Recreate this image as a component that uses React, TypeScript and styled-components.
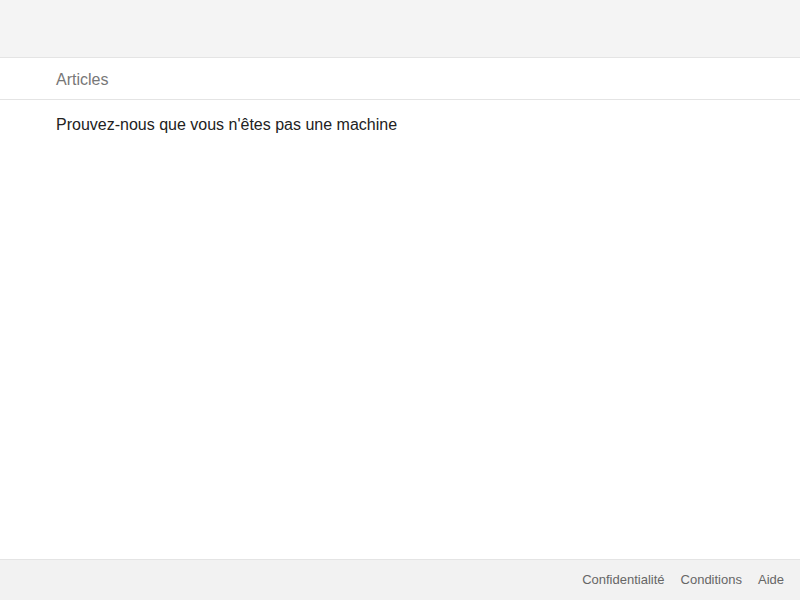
import React from "react";
import styled, { createGlobalStyle } from "styled-components";

const Global = createGlobalStyle`
  html, body { margin: 0; padding: 0; height: 100%; background: #fff; }
  body { font-family: "Liberation Sans", Arial, sans-serif; }
  #root { height: 100%; }
`;

const Page = styled.div`
  display: flex;
  flex-direction: column;
  height: 600px;
`;

const Header = styled.header`
  flex: none;
  height: 57px;
  background: #f4f4f4;
  border-bottom: 1px solid #e4e4e4;
`;

const TabBar = styled.nav`
  flex: none;
  height: 39px;
  padding-top: 2px;
  display: flex;
  align-items: center;
  padding-left: 56px;
  border-bottom: 1px solid #e4e4e4;
`;

const Tab = styled.span`
  font-size: 16px;
  color: #777;
`;

const Main = styled.main`
  flex: 1;
  padding: 15px 56px 0;
`;

const Title = styled.h1`
  margin: 0;
  font-size: 16px;
  font-weight: normal;
  color: #222;
  line-height: 20px;
`;

const Footer = styled.footer`
  flex: none;
  height: 38px;
  padding-bottom: 2px;
  background: #f2f2f2;
  border-top: 1px solid #e4e4e4;
  display: flex;
  align-items: center;
  justify-content: flex-end;
  gap: 16px;
  padding-right: 16px;
`;

const FootLink = styled.a`
  font-size: 13px;
  color: #666;
  text-decoration: none;
`;

export default function App() {
  return (
    <>
      <Global />
      <Page>
        <Header />
        <TabBar>
          <Tab>Articles</Tab>
        </TabBar>
        <Main>
          <Title>Prouvez-nous que vous n'êtes pas une machine</Title>
        </Main>
        <Footer>
          <FootLink href="#">Confidentialité</FootLink>
          <FootLink href="#">Conditions</FootLink>
          <FootLink href="#">Aide</FootLink>
        </Footer>
      </Page>
    </>
  );
}
